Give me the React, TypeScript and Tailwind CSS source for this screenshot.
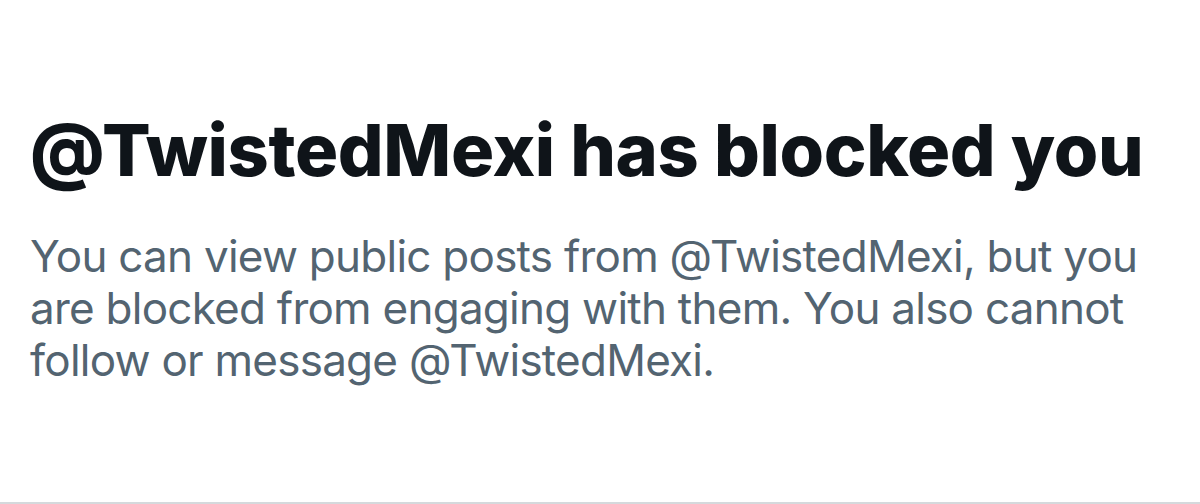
import React from "react";

const App: React.FC = () => {
  return (
    <div className="w-[1200px] h-[504px] bg-white flex flex-col border-b-2 border-[#d5d9dc] font-['Inter',sans-serif]">
      <div className="pl-[30px] pt-[107px] flex flex-col gap-[37px]">
        <h1 className="text-[72px] leading-[86px] font-extrabold tracking-[-0.005em] text-[#0f1419] whitespace-nowrap">
          @TwistedMexi has blocked you
        </h1>
        <p className="text-[44px] leading-[52px] tracking-[-0.017em] text-[#536471] max-w-[1120px]">
          You can view public posts from @TwistedMexi, but you are blocked from engaging with them. You also cannot follow or message @TwistedMexi.
        </p>
      </div>
    </div>
  );
};

export default App;
